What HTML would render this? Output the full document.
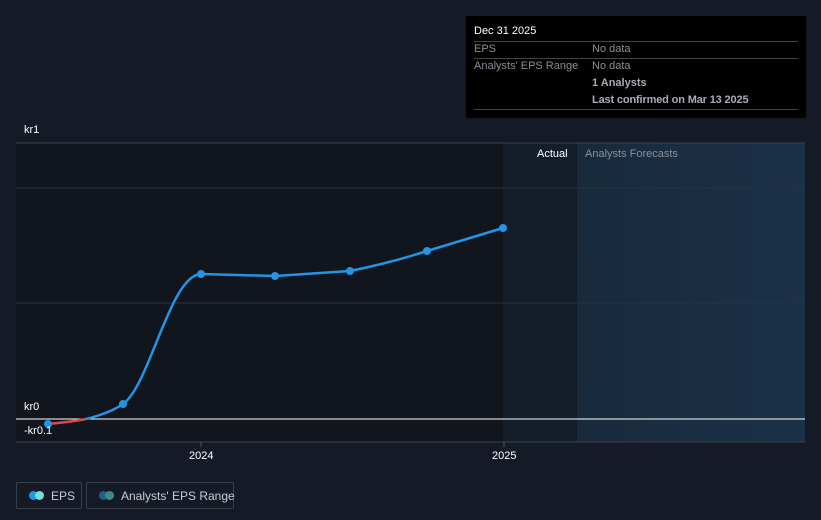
<!DOCTYPE html>
<html><head><style>
body{margin:0;width:821px;height:520px;background:#151b26;font-family:"Liberation Sans",sans-serif;overflow:hidden;position:relative}
.t{position:absolute;font-size:11px;color:#fff;white-space:nowrap}
.tip{position:absolute;left:466px;top:16px;width:340px;height:102px;background:#000}
.tip .r{position:absolute;left:8px;width:324px;font-size:11px;color:#8a8f96;white-space:nowrap}
.ln{position:absolute;left:8px;width:324px;height:1px;background:#444}
.leg{position:absolute;top:482px;height:27px;border:1px solid #3a404a;border-radius:2px;font-size:12px;color:#c8ccd2;box-sizing:border-box;white-space:nowrap}
</style></head><body>
<svg width="821" height="520" style="position:absolute;left:0;top:0">
<defs><linearGradient id="g" x1="0" x2="1"><stop offset="0" stop-color="#182a3c"/><stop offset="1" stop-color="#1b3148"/></linearGradient></defs>
<rect x="16" y="143" width="487" height="299" fill="#11151d"/>
<rect x="503" y="143" width="74" height="299" fill="#141e2a"/>
<rect x="577" y="143" width="228" height="299" fill="url(#g)"/>
<line x1="16" y1="143" x2="805" y2="143" stroke="#3a414c"/>
<line x1="16" y1="188" x2="805" y2="188" stroke="#2a313b"/>
<line x1="16" y1="303" x2="805" y2="303" stroke="#2a313b"/>
<line x1="16" y1="419" x2="805" y2="419" stroke="#fff"/>
<line x1="16" y1="442" x2="805" y2="442" stroke="#3a414c"/>
<line x1="201" y1="442" x2="201" y2="447" stroke="#555"/>
<line x1="504" y1="442" x2="504" y2="447" stroke="#555"/>
<path d="M48 424 Q70 422 86 419" stroke="#e0474c" stroke-width="2.5" fill="none"/>
<path d="M86 419 Q110 413 123 404 C150 385 170 275 201 274 L275 276 L350 271 Q390 263 427 251 L503 228" stroke="#2394e6" stroke-width="2.5" fill="none"/>
<g fill="#2394e6"><circle cx="48" cy="424" r="4"/><circle cx="123" cy="404" r="4"/><circle cx="201" cy="274" r="4"/><circle cx="275" cy="276" r="4"/><circle cx="350" cy="271" r="4"/><circle cx="427" cy="251" r="4"/><circle cx="503" cy="228" r="4"/></g>
</svg>
<div class="t" style="left:24px;top:124px">kr1</div>
<div class="t" style="left:24px;top:401px">kr0</div>
<div class="t" style="left:24px;top:425px">-kr0.1</div>
<div class="t" style="left:189px;top:450px">2024</div>
<div class="t" style="left:492px;top:450px">2025</div>
<div class="t" style="left:537px;top:148px">Actual</div>
<div class="t" style="left:585px;top:148px;color:#8a9099">Analysts Forecasts</div>
<div class="tip">
<div class="r" style="top:9px;color:#fff">Dec 31 2025</div>
<div class="ln" style="top:25px"></div>
<div class="r" style="top:27px">EPS<span style="position:absolute;left:118px">No data</span></div>
<div class="ln" style="top:42px"></div>
<div class="r" style="top:44px">Analysts' EPS Range<span style="position:absolute;left:118px">No data</span></div>
<div class="r" style="top:61px;font-weight:bold;color:#aab"><span style="position:absolute;left:118px">1 Analysts</span></div>
<div class="r" style="top:78px;font-weight:bold;color:#aab;letter-spacing:-0.15px"><span style="position:absolute;left:118px">Last confirmed on Mar 13 2025</span></div>
<div class="ln" style="top:93px"></div>
</div>
<div class="leg" style="left:16px;width:66px">
<span style="position:absolute;left:12px;top:8px;width:9px;height:9px;border-radius:50%;background:#2394e6"></span>
<span style="position:absolute;left:18px;top:8px;width:9px;height:9px;border-radius:50%;background:#6fe0d6"></span>
<span style="position:absolute;left:34px;top:6px">EPS</span></div>
<div class="leg" style="left:86px;width:148px">
<span style="position:absolute;left:12px;top:8px;width:9px;height:9px;border-radius:50%;background:#1e5f8c"></span>
<span style="position:absolute;left:18px;top:8px;width:9px;height:9px;border-radius:50%;background:#3f8a85"></span>
<span style="position:absolute;left:34px;top:6px">Analysts' EPS Range</span></div>
</body></html>
